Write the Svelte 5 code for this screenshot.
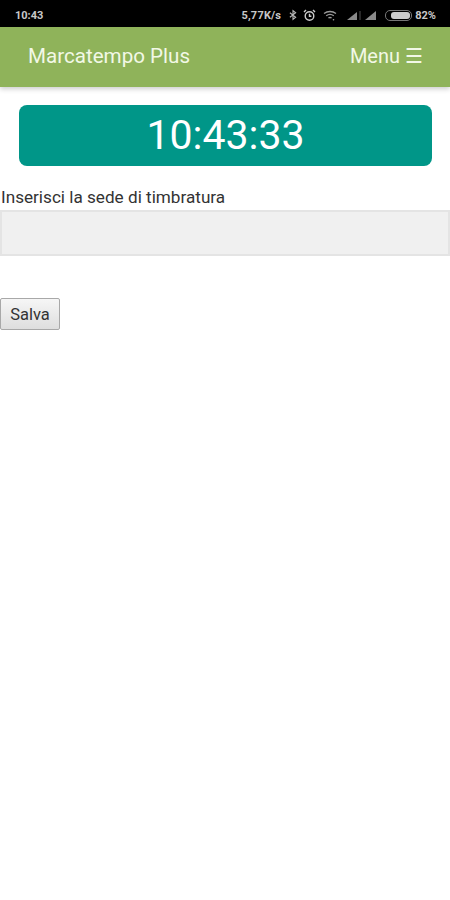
<script>
  let time = '10:43:33';
  let sede = '';
</script>

<div class="status">
  <span class="clock">10:43</span>
  <div class="indicators">
    <span class="speed">5,77K/s</span>
    <svg class="ico bt" width="8" height="12" viewBox="0 0 9 12" fill="none" stroke="#bbb" stroke-width="1.2">
      <path d="M1 3.5 7.5 8.5 4.5 11V1L7.5 3.5 1 8.5" />
    </svg>
    <svg class="ico alarm" width="13" height="13" viewBox="0 0 13 13" fill="none" stroke="#ccc" stroke-width="1.4">
      <circle cx="6.5" cy="7" r="4.3" />
      <path d="M6.5 4.8V7.2H8.4M1 3 3 1M12 3 10 1" />
    </svg>
    <svg class="ico wifi" width="14" height="11" viewBox="0 0 14 11" fill="none" stroke="#999" stroke-width="1.3">
      <path d="M1 3.5C4.5.8 9.5.8 13 3.5M3.2 5.8C5.4 4.2 8.6 4.2 10.8 5.8M5.4 8C6.3 7.4 7.7 7.4 8.6 8" />
      <circle cx="10.5" cy="9.8" r=".8" fill="#aaa" stroke="none" />
    </svg>
    <svg class="ico sig1" width="15" height="10" viewBox="0 0 15 10">
      <path d="M0 10 10 2V10Z" fill="#8a8a8a" />
      <path d="M13 1V10" stroke="#3a3a3a" stroke-width="1.4" />
    </svg>
    <svg class="ico sig2" width="13" height="10" viewBox="0 0 13 10">
      <path d="M0 10 11 1V10Z" fill="#8a8a8a" />
    </svg>
    <div class="battery"><div class="level" style="width: {82}%"></div></div>
    <span class="pct">82%</span>
  </div>
</div>

<header>
  <span class="brand">Marcatempo Plus</span>
  <span class="menu">Menu ☰</span>
</header>

<main>
  <div class="time">{time}</div>
  <label for="sede">Inserisci la sede di timbratura</label>
  <input id="sede" type="text" bind:value={sede} />
  <button type="button">Salva</button>
</main>

<style>
  :global(body) {
    font-family: Roboto, sans-serif;
    background: #fff;
    color: #333;
  }

  .status {
    height: 27px;
    background: #000;
    color: #c8c8c8;
    display: flex;
    align-items: center;
    justify-content: space-between;
    padding: 3px 14px 0 15px;
    box-sizing: border-box;
    font-size: 11px;
    font-weight: 700;
  }

  .indicators {
    display: flex;
    align-items: center;
  }

  .speed {
    letter-spacing: 0.2px;
  }

  .bt {
    margin-left: 8px;
  }

  .alarm {
    margin-left: 6px;
  }

  .wifi {
    margin-left: 7px;
  }

  .sig1 {
    margin-left: 10px;
  }

  .sig2 {
    margin-left: 3px;
  }

  .battery {
    width: 27px;
    height: 11px;
    margin-left: 7px;
    padding: 1px;
    box-sizing: border-box;
    border: 1px solid #777;
    border-radius: 5px;
  }

  .level {
    height: 100%;
    background: #ccc;
    border-radius: 3px;
    margin-left: auto;
  }

  .pct {
    margin-left: 3px;
  }

  header {
    height: 60px;
    background: #8fb35a;
    color: #f2f8e6;
    display: flex;
    align-items: center;
    justify-content: space-between;
    padding: 0 27px 2px 28px;
    box-sizing: border-box;
    font-size: 20.6px;
    box-shadow: 0 2px 5px rgba(0, 0, 0, 0.2);
  }

  .menu {
    font-size: 20px;
    white-space: pre;
  }

  main {
    display: flex;
    flex-direction: column;
    align-items: flex-start;
    padding-top: 18px;
  }

  .time {
    align-self: center;
    width: 413px;
    height: 61px;
    margin-left: 1px;
    background: #009688;
    color: #fff;
    border-radius: 8px;
    font-size: 41px;
    line-height: 61px;
    text-align: center;
  }

  label {
    margin: 22px 0 0 1px;
    font-size: 17.15px;
    line-height: 19px;
  }

  input {
    width: 100%;
    height: 46px;
    margin: 3px 0 0;
    padding: 0 8px;
    box-sizing: border-box;
    background: #f0f0f0;
    border: 2px solid #e4e4e4;
    outline: none;
  }

  button {
    width: 60px;
    height: 32px;
    margin-top: 42px;
    padding: 0;
    background: linear-gradient(#f6f6f6, #dedede);
    color: #333;
    border: 1px solid #a8a8a8;
    border-radius: 2px;
    font-family: inherit;
    font-size: 16.5px;
  }
</style>
